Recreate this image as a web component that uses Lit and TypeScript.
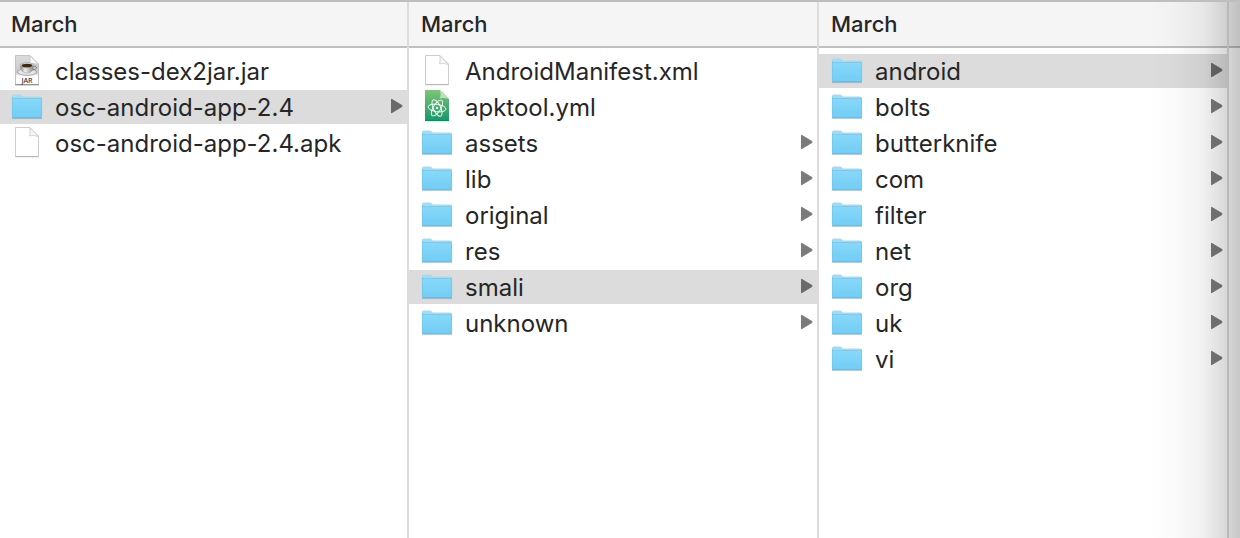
import { LitElement, html, css, svg } from "lit";
import { customElement, property, state } from "lit/decorators.js";

type Kind = "folder" | "file" | "jar" | "atom";
interface Entry {
  name: string;
  kind: Kind;
}
interface Column {
  title: string;
  selected: number;
  entries: Entry[];
}

const folder = (name: string): Entry => ({ name, kind: "folder" });

const COLUMNS: Column[] = [
  {
    title: "March",
    selected: 1,
    entries: [
      { name: "classes-dex2jar.jar", kind: "jar" },
      folder("osc-android-app-2.4"),
      { name: "osc-android-app-2.4.apk", kind: "file" },
    ],
  },
  {
    title: "March",
    selected: 6,
    entries: [
      { name: "AndroidManifest.xml", kind: "file" },
      { name: "apktool.yml", kind: "atom" },
      ...["assets", "lib", "original", "res", "smali", "unknown"].map(folder),
    ],
  },
  {
    title: "March",
    selected: 0,
    entries: ["android", "bolts", "butterknife", "com", "filter", "net", "org", "uk", "vi"].map(folder),
  },
];

@customElement("entry-icon")
class EntryIcon extends LitElement {
  @property() kind: Kind = "file";

  static styles = css`
    :host {
      display: block;
      width: 32px;
      height: 34px;
    }
    svg {
      display: block;
    }
    .label {
      font: 600 7px "Open Sans", sans-serif;
      fill: #3c3c3c;
    }
  `;

  private folder() {
    return svg`
      <defs>
        <linearGradient id="front" x1="0" y1="0" x2="0" y2="1">
          <stop offset="0" stop-color="#86d9fa"></stop>
          <stop offset="1" stop-color="#72ccf4"></stop>
        </linearGradient>
      </defs>
      <path d="M1 28.600h30" stroke="#000" stroke-opacity=".2" stroke-width="1"></path>
      <path d="M1 6q0-1.500 1.500-1.500h6.500q1 0 1.800 1l1 1h17.700q1.500 0 1.500 1.500V28H1z" fill="#9fdcf6"></path>
      <path d="M1 8.800h30V27q0 1-1 1H2q-1 0-1-1z" fill="url(#front)"></path>
      <path d="M1 8.500h30" stroke="#74c6e9" stroke-width=".8"></path>
      <path d="M1.400 7v20M30.600 9v18" stroke="#74c4e4" stroke-width=".7"></path>
      <path d="M1.500 27.700h29" stroke="#62b4d9" stroke-width=".8"></path>`;
  }

  private file() {
    return svg`
      <path d="M4.500 1.500H19l8.500 8.500v20.500h-23z" fill="#fff" stroke="#cdcdcd"></path>
      <path d="M4.500 30.700h23" stroke="#b4b4b4"></path>
      <path d="M18.700 1.500q1.200 5-.2 8.300 4-1 9 .700z" fill="#f6f6f6" stroke="#cacaca" stroke-width=".8"></path>`;
  }

  private jar() {
    return svg`
      <defs>
        <linearGradient id="paper" x1="0" y1="0" x2="0" y2="1">
          <stop offset="0" stop-color="#dcdcdc"></stop>
          <stop offset=".6" stop-color="#c8c8c8"></stop>
          <stop offset=".7" stop-color="#fff"></stop>
        </linearGradient>
        <linearGradient id="china" x1="0" y1="0" x2="1" y2="0">
          <stop offset="0" stop-color="#808080"></stop>
          <stop offset=".35" stop-color="#eee"></stop>
          <stop offset="1" stop-color="#8a8a8a"></stop>
        </linearGradient>
      </defs>
      <path d="M4.500 1.500H19l8.500 8.500v20.500h-23z" fill="url(#paper)" stroke="#c4c4c4"></path>
      <path d="M4 30.800h24" stroke="#808080"></path>
      <path d="M18.700 1.500q1.200 5-.2 8.300 4-1 9 .700z" fill="#f8f8f8" stroke="#c2c2c2" stroke-width=".7"></path>
      <ellipse cx="16" cy="18" rx="9.500" ry="3.400" fill="#e5e5e5" stroke="#8a8a8a" stroke-width=".7"></ellipse>
      <path d="M22 12.500q4-.8 3.500 1.500-.6 2-5 2" fill="none" stroke="#808080" stroke-width="1"></path>
      <path d="M9.300 11.500q.3 7.500 6.700 7.500t6.700-7.500z" fill="url(#china)" stroke="#777" stroke-width=".3"></path>
      <ellipse cx="16" cy="11.300" rx="6.700" ry="2.500" fill="#efebe4" stroke="#777" stroke-width=".5"></ellipse>
      <ellipse cx="16" cy="11.500" rx="5.500" ry="1.800" fill="#3d2815"></ellipse>
      <text class="label" x="16" y="29" text-anchor="middle">JAR</text>`;
  }

  private atom() {
    return svg`
      <defs>
        <linearGradient id="green" x1="0" y1="0" x2="0" y2="1">
          <stop offset="0" stop-color="#7cc576"></stop>
          <stop offset="1" stop-color="#16986a"></stop>
        </linearGradient>
      </defs>
      <path d="M4 0h15l9 9v22H4z" fill="url(#green)"></path>
      <path d="M4 30.600h24" stroke="#148259" stroke-width=".8"></path>
      <path d="M19 0q1.300 5-.2 8.500Q23 7.500 28 9z" fill="#b9dfb4"></path>
      <g fill="none" stroke="#fff" stroke-width=".9">
        <ellipse cx="16" cy="18" rx="9" ry="3.700" transform="rotate(8 16 18)"></ellipse>
        <ellipse cx="16" cy="18" rx="9" ry="3.700" transform="rotate(65 16 18)"></ellipse>
        <ellipse cx="16" cy="18" rx="9" ry="3.700" transform="rotate(122 16 18)"></ellipse>
      </g>
      <circle cx="16" cy="18" r="1.200" fill="#fff"></circle>`;
  }

  render() {
    return html`<svg width="32" height="34" viewBox="0 0 32 34" aria-hidden="true">${this[this.kind]()}</svg>`;
  }
}

@customElement("browser-column")
class BrowserColumn extends LitElement {
  @property({ attribute: false }) column!: Column;
  @state() private current = -1;

  static styles = css`
    :host {
      display: flex;
      flex-direction: column;
      box-sizing: border-box;
      min-width: 0;
      border-right: 2px solid #dcdcdc;
    }
    .title {
      margin: 0;
      padding: 0 12px;
      background: #f5f5f5;
      border-bottom: 2px solid #c0c0c0;
      font-size: 22px;
      font-weight: 500;
      line-height: 44px;
    }
    .list {
      display: flex;
      flex-direction: column;
      gap: 2px;
      margin: 0;
      padding: 6px 0;
      list-style: none;
    }
    .row {
      display: flex;
      align-items: center;
      gap: 12px;
      width: 100%;
      height: 34px;
      padding: 0 4px 0 12px;
      border: 0;
      background: none;
      color: inherit;
      font: inherit;
      line-height: 34px;
      text-align: left;
    }
    .row.selected {
      background: #dcdcdc;
    }
    .name {
      flex: 1;
      min-width: 0;
      padding-top: 2px;
      overflow: hidden;
      white-space: nowrap;
      text-overflow: ellipsis;
    }
    .arrow {
      display: block;
      flex: none;
      margin-bottom: 2px;
      fill: #7b7b7b;
    }
    .selected .arrow {
      fill: #6a6a6a;
    }
  `;

  render() {
    const selected = this.current < 0 ? this.column.selected : this.current;
    return html`
      <h2 class="title">${this.column.title}</h2>
      <ul class="list">
        ${this.column.entries.map(
          (entry, i) => html`<li>
            <button
              type="button"
              class="row ${i === selected ? "selected" : ""}"
              @click=${() => (this.current = i)}
            >
              <entry-icon .kind=${entry.kind}></entry-icon>
              <span class="name">${entry.name}</span>
              ${entry.kind === "folder"
                ? html`<svg class="arrow" width="13" height="16" viewBox="0 0 13 16" aria-hidden="true">
                    <path d="M1 1.500q0-1 1-.500l10 6q1 1 0 2l-10 6q-1 .500-1-.500z" />
                  </svg>`
                : ""}
            </button>
          </li>`
        )}
      </ul>
    `;
  }
}

@customElement("app-root")
class AppRoot extends LitElement {
  static styles = css`
    :host {
      display: grid;
      grid-template-columns: repeat(3, 1fr) 11px;
      position: relative;
      min-height: 100vh;
      margin-left: -1px;
      box-sizing: border-box;
      overflow: hidden;
      border-top: 2px solid #bebebe;
      background: #fff;
      color: #262626;
      font-family: Inter, "Liberation Sans", sans-serif;
      font-size: 24px;
    }
    .rest {
      height: 44px;
      background: #f5f5f5;
      border-bottom: 2px solid #c0c0c0;
    }
    .shade {
      position: absolute;
      inset: 0 0 0 auto;
      width: 90px;
      pointer-events: none;
      background: linear-gradient(
        to right,
        rgba(0, 0, 0, 0),
        rgba(0, 0, 0, 0.02) 30%,
        rgba(0, 0, 0, 0.06) 60%,
        rgba(0, 0, 0, 0.15) 84%,
        rgba(0, 0, 0, 0.22)
      );
    }
  `;

  render() {
    return html`
      ${COLUMNS.map((column) => html`<browser-column .column=${column}></browser-column>`)}
      <div class="rest"></div>
      <div class="shade"></div>
    `;
  }
}
